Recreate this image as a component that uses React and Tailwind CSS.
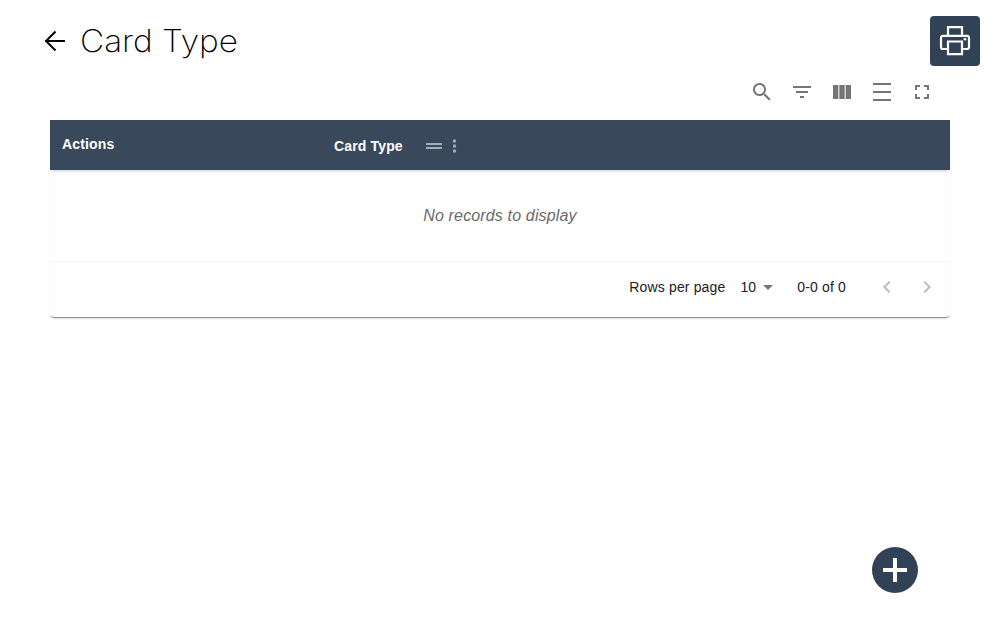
import React from "react";

function Icon({ d, className = "" }) {
  return (
    <svg viewBox="0 0 24 24" className={`h-6 w-6 shrink-0 fill-current ${className}`}>
      <path d={d} />
    </svg>
  );
}

const toolbar = [
  ["Search", "M15.5 14h-.79l-.28-.27C15.41 12.59 16 11.11 16 9.5 16 5.91 13.09 3 9.5 3S3 5.91 3 9.5 5.91 16 9.5 16c1.61 0 3.09-.59 4.23-1.57l.27.28v.79l5 4.99L20.49 19l-4.99-5zm-6 0C7.01 14 5 11.99 5 9.5S7.01 5 9.5 5 14 7.01 14 9.5 11.99 14 9.5 14z"],
  ["Filters", "M10 18h4v-2h-4v2zM3 6v2h18V6H3zm3 7h12v-2H6v2z"],
  ["Columns", "M14.67 5v14H9.33V5h5.34zm1 14H21V5h-5.33v14zm-7.34 0V5H3v14h5.33z"],
  ["Density", "M3 3h18v2H3zM3 11h18v2H3zM3 19h18v2H3z"],
  ["Full screen", "M7 14H5v5h5v-2H7v-3zm-2-4h2V7h3V5H5v5zm12 7h-3v2h5v-5h-2v3zM14 5v2h3v3h2V5h-5z"],
];

export default function App() {
  return (
    <div className="relative h-[625px] w-[1000px] overflow-hidden bg-white font-['Liberation_Sans',Arial,sans-serif] text-black/87">
      <header className="flex h-[72px] justify-between pt-4 pr-5 pl-[40px]">
        <div className="flex h-[50px] items-center">
          <svg viewBox="0 0 30 30" className="h-[30px] w-[30px] fill-none stroke-black stroke-2">
            <path d="M25 15H6M15.500 5.500 6 15l9.500 9.500" />
          </svg>
          <h1 className="ml-[10px] origin-left scale-x-[1.075] font-[Inter,sans-serif] text-[31px] leading-[50px] font-extralight whitespace-nowrap text-black">
            Card Type
          </h1>
        </div>
        <button aria-label="Print" className="h-[50px] w-[50px] rounded-[4px] bg-[#324256]">
          <svg viewBox="0 0 50 50" className="h-[50px] w-[50px] fill-none stroke-white stroke-[2.2]">
            <path d="M18 19.500V11.200h14v8.300" />
            <path d="M18 33h-5a2 2 0 0 1-2-2V22a2 2 0 0 1 2-2.200h24a2 2 0 0 1 2 2.200v9a2 2 0 0 1-2 2h-5" />
            <path d="M18 25.500h14v12.700H18z" />
            <circle cx="35" cy="23.300" r="1.300" className="fill-white stroke-none" />
          </svg>
        </button>
      </header>
      <div className="flex h-12 items-center justify-end pr-[58px] pb-2 text-[#757575]">
        {toolbar.map(([name, d]) => (
          <button key={name} aria-label={name} className="flex h-10 w-10 items-center justify-center">
            <Icon d={d} />
          </button>
        ))}
      </div>
      <main className="mx-[50px]">
        <div className="h-[197px] rounded-b-[4px] shadow-[0_1px_0_-0.5px_rgba(0,0,0,0.36),0_2px_2px_-1px_rgba(0,0,0,0.4)]">
          <div className="flex h-[50px] bg-[#3a485b] text-sm font-bold text-white shadow-[0_3px_3px_-2px_rgba(0,0,0,0.2)]">
            <div className="w-[284px] pt-[14px] pl-3 leading-5 tracking-[0.15px]">Actions</div>
            <div className="flex h-[50px] items-center">
              <span className="w-[88px] pt-[2px] leading-5 tracking-[0.15px] whitespace-nowrap">Card Type</span>
              <svg viewBox="0 0 24 24" className="mt-[2px] h-6 w-6 fill-[#a3abb5]">
                <path d="M4 9h16v2H4zM4 13h16v2H4z" />
              </svg>
              <svg viewBox="0 0 18 24" className="mt-[2px] h-6 w-[18px] fill-[#a3abb5]">
                <circle cx="8.500" cy="7" r="1.700" />
                <circle cx="8.500" cy="12" r="1.700" />
                <circle cx="8.500" cy="17" r="1.700" />
              </svg>
            </div>
          </div>
          <div className="flex h-[91px] items-center justify-center text-base tracking-[0.15px] text-[#6a6a6a] italic">
            No records to display
          </div>
          <div className="flex h-[56px] items-center justify-end border-t border-[#f5f5f5] pb-[5px] text-sm text-[#212121]">
            <span className="mr-[15px] tracking-[0.15px]">Rows per page</span>
            <span className="pb-px tracking-[0.15px]">10</span>
            <Icon d="M7 10l5 5 5-5z" className="text-[#757575]" />
            <span className="ml-[17px] tracking-[0.15px]">0-0 of 0</span>
            <Icon d="M15.410 7.410 14 6l-6 6 6 6 1.410-1.410L10.830 12z" className="ml-[29px] text-[#bdbdbd]" />
            <Icon d="M10 6 8.590 7.410 13.170 12l-4.580 4.590L10 18l6-6z" className="mr-[11px] ml-4 text-[#bdbdbd]" />
          </div>
        </div>
      </main>
      <button
        aria-label="Add card type"
        className="absolute top-[547px] left-[872px] flex h-[46px] w-[46px] items-center justify-center rounded-full bg-[#324256]"
      >
        <svg viewBox="0 0 24 24" className="h-6 w-6 fill-white">
          <path d="M0 10h10V0h4v10h10v4H14v10h-4V14H0z" />
        </svg>
      </button>
    </div>
  );
}
